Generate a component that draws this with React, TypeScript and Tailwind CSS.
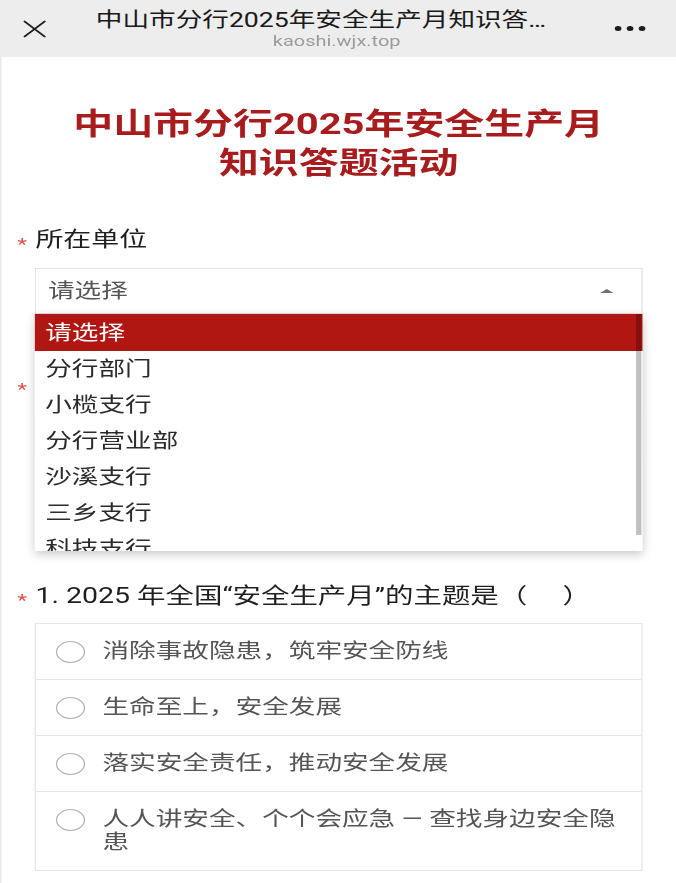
import React from 'react';

const units = ['请选择', '分行部门', '小榄支行', '分行营业部', '沙溪支行', '三乡支行', '科技支行'];

const choices = [
  '消除事故隐患，筑牢安全防线',
  '生命至上，安全发展',
  '落实安全责任，推动安全发展',
  '人人讲安全、个个会应急 — 查找身边安全隐患',
];

function Star() {
  return (
    <span className="w-[13.6px] shrink-0 translate-y-[4px] text-[17px] leading-none text-[#e0504a]">*</span>
  );
}

export default function App() {
  return (
    <div className="min-h-screen overflow-hidden bg-white">
      {/* the capture is stretched sideways, so the page is laid out narrow and widened */}
      <div className="w-[508px] origin-top-left scale-x-[1.3307] font-[Roboto,'Noto_Sans_CJK_SC',sans-serif]">
        {/* Top bar */}
        <div className="flex h-[57px] bg-[#ededed]">
          <div className="flex w-[51px] items-center justify-center">
            <svg width="18" height="18" viewBox="0 0 18 18" fill="none">
              <path d="M1.5 1.5l15 15M16.5 1.5l-15 15" stroke="#1c1c1c" strokeWidth="1.7" strokeLinecap="round" />
            </svg>
          </div>
          <div className="flex min-w-0 flex-1 flex-col pt-[8px]">
            <div className="ml-[21px] w-[352px] truncate text-[20px] leading-[24px] text-[#191919]">
              中山市分行2025年安全生产月知识答题活动
            </div>
            <div className="pl-[16px] text-center text-[15px] leading-[18px] text-[#9b9b9b]">kaoshi.wjx.top</div>
          </div>
          <div className="flex w-[69px] items-center justify-center gap-[4.5px]">
            <span className="h-[4.5px] w-[4.5px] rounded-full bg-[#1c1c1c]" />
            <span className="h-[4.5px] w-[4.5px] rounded-full bg-[#1c1c1c]" />
            <span className="h-[4.5px] w-[4.5px] rounded-full bg-[#1c1c1c]" />
          </div>
        </div>

        {/* Body */}
        <div className="border-l border-[#e8e8e8] pb-10">
          <div className="pt-[47px] text-center text-[30px] font-bold leading-[39px] text-[#a81c1e]">
            <div>中山市分行2025年安全生产月</div>
            <div>知识答题活动</div>
          </div>

          {/* 所在单位 */}
          <div className="mt-[44px] flex h-[28px] items-center pl-[12px] text-[21px] text-[#1f1f1f]">
            <Star />
            <span>所在单位</span>
          </div>
          <div className="relative mx-[25px] mt-[14px]">
            <div className="flex h-[46px] items-center justify-between border border-[#e3e3e3] pl-[9px] pr-[21px] text-[20px] text-[#555]">
              <span>请选择</span>
              <span className="h-0 w-0 border-x-[5px] border-b-[4px] border-x-transparent border-b-[#6e6e6e]" />
            </div>
            <div className="absolute left-0 right-0 top-full z-10 h-[237px] overflow-hidden bg-white shadow-[0_3px_8px_rgba(0,0,0,0.22)]">
              {units.map((u, i) => (
                <div
                  key={u}
                  className={
                    i === 0
                      ? 'flex h-[37px] items-center bg-[#b01612] px-[8px] text-[20px] text-white'
                      : 'flex h-[36px] items-center px-[8px] text-[20px] text-[#2b2b2b]'
                  }
                >
                  {u}
                </div>
              ))}
              <div className="absolute right-[1px] top-0 h-[221px] w-[4.5px] bg-black/25" />
            </div>
          </div>

          {/* second field, covered by the open list */}
          <div className="mt-[57px] flex h-[28px] items-center pl-[12px] text-[21px]">
            <Star />
          </div>
          <div className="mx-[25px] mt-[14px] h-[46px] border border-[#e3e3e3]" />

          {/* Question 1 */}
          <div className="mt-[123px] flex h-[28px] items-center pl-[12px] text-[21.4px] text-[#1f1f1f]">
            <Star />
            <span className="whitespace-pre">1. 2025 年全国“安全生产月”的主题是（     ）</span>
          </div>
          <div className="mx-[25px] mt-[13px] border border-[#e6e6e6]">
            {choices.map((c, i) => (
              <div
                key={c}
                className={`flex items-start gap-[13px] py-[16px] pl-[15px] pr-[10px] ${i > 0 ? 'border-t border-[#e6e6e6]' : ''}`}
              >
                <span className="mt-[0.5px] h-[22px] w-[22px] shrink-0 rounded-full border-[1.5px] border-[#b3b3b3]" />
                <span className="text-[20px] leading-[23px] text-[#555]">{c}</span>
              </div>
            ))}
          </div>
        </div>
      </div>
    </div>
  );
}
